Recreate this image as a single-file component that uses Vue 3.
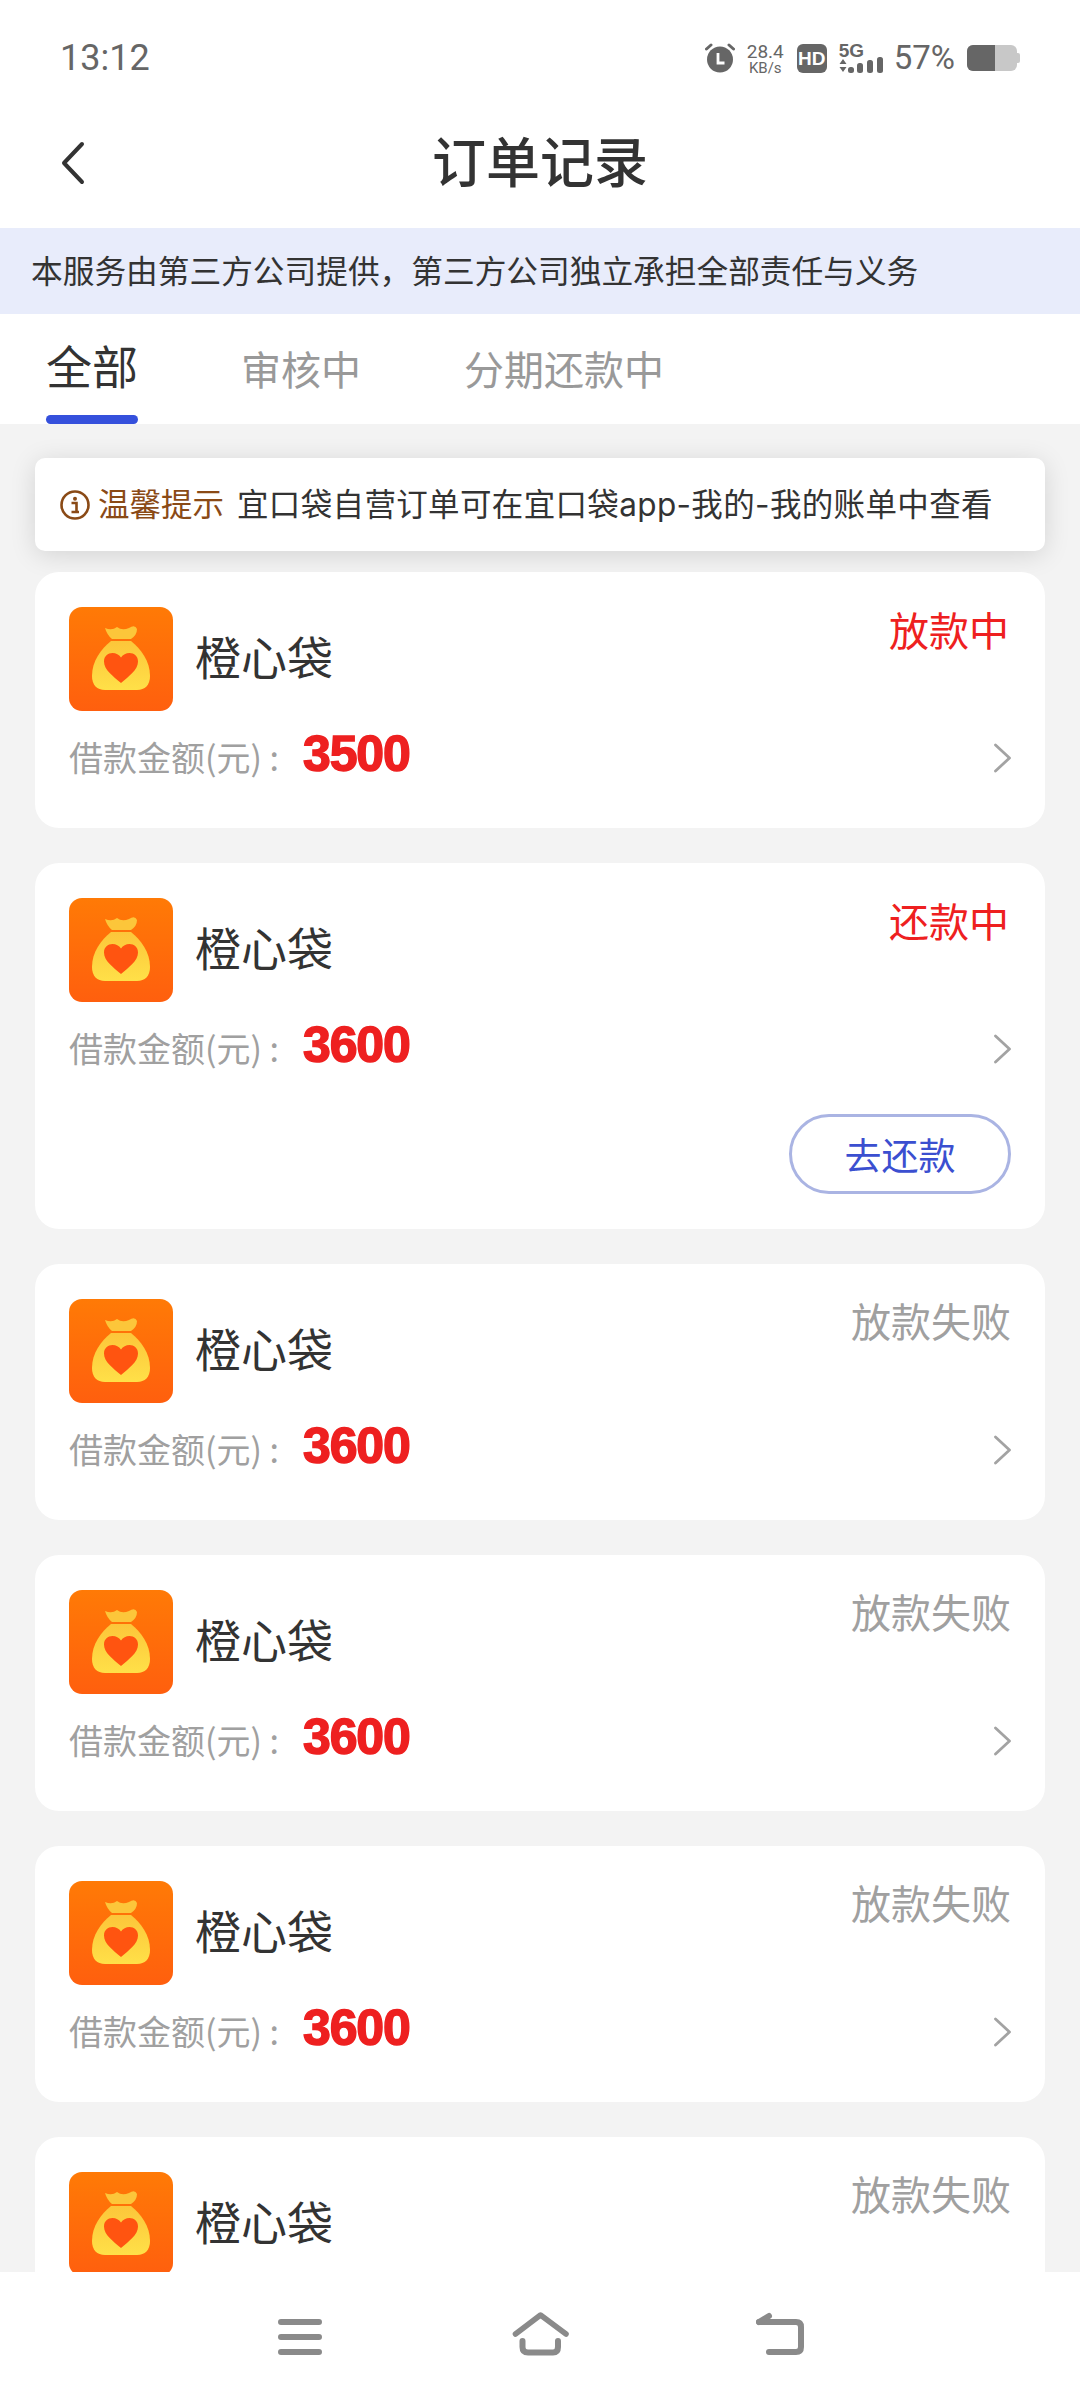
<script setup>
const cards = [
  { amount: '3500', status: '放款中', active: true },
  { amount: '3600', status: '还款中', active: true, action: '去还款' },
  { amount: '3600', status: '放款失败' },
  { amount: '3600', status: '放款失败' },
  { amount: '3600', status: '放款失败' },
  { amount: '3600', status: '放款失败' },
]
</script>

<template>
  <div class="page">
    <div class="status-bar">
      <span class="time">13:12</span>
      <div class="status-right">
        <svg class="alarm" viewBox="0 0 30 30" width="30" height="30">
          <circle cx="15" cy="16.5" r="13" fill="#666" />
          <path d="M1.5 6 L6 2 M28.500 6 L24 2" stroke="#666" stroke-width="3" stroke-linecap="round" />
          <path d="M13 10 V20 H19.500" fill="none" stroke="#fff" stroke-width="2.8" />
        </svg>
        <div class="speed"><span>28.4</span><span class="unit">KB/s</span></div>
        <span class="hd">HD</span>
        <div class="signal">
          <span class="five-g">5G</span>
          <svg viewBox="0 0 44 30" width="44" height="30">
            <path d="M0.5 21 L4 16 L7.500 21 Z M0.5 24 H7.500 L4 29 Z" fill="#666" />
            <rect x="9" y="24" width="6" height="6" rx="2.5" fill="#666" />
            <rect x="18" y="20" width="6" height="10" rx="2.5" fill="#666" />
            <rect x="28" y="17" width="6" height="13" rx="2.5" fill="#666" />
            <rect x="38" y="14" width="6" height="16" rx="2.5" fill="#666" />
          </svg>
        </div>
        <span class="percent">57%</span>
        <div class="battery"><div class="battery-level"></div></div>
      </div>
    </div>

    <header class="title-bar">
      <svg class="back" viewBox="0 0 26 44" width="26" height="44">
        <path d="M22 3 L4 22 L22 41" fill="none" stroke="#333" stroke-width="4" stroke-linecap="round" stroke-linejoin="round" />
      </svg>
      <h1>订单记录</h1>
    </header>

    <div class="banner">本服务由第三方公司提供，第三方公司独立承担全部责任与义务</div>

    <nav class="tabs">
      <span class="tab tab-active">全部</span>
      <span class="tab">审核中</span>
      <span class="tab">分期还款中</span>
    </nav>

    <main class="content">
      <div class="notice">
        <svg viewBox="0 0 30 30" width="30" height="30" class="notice-icon">
          <circle cx="15" cy="15" r="13.500" fill="none" stroke="#8a4a16" stroke-width="2.6" />
          <circle cx="15" cy="8.800" r="2" fill="#8a4a16" />
          <path d="M11.500 13 H16.500 V21 M11.500 22 H19" fill="none" stroke="#8a4a16" stroke-width="2.6" />
        </svg>
        <span class="notice-label">温馨提示</span>
        <span class="notice-text">宜口袋自营订单可在宜口袋app-我的-我的账单中查看</span>
      </div>

      <div class="list">
        <article v-for="(card, i) in cards" :key="i" class="card">
          <div class="card-head">
            <svg class="logo" viewBox="0 0 104 104" width="104" height="104">
              <defs>
                <linearGradient id="logoBg" x1="0" y1="0" x2="0" y2="1">
                  <stop offset="0" stop-color="#ff7a06" />
                  <stop offset="1" stop-color="#ff5f0e" />
                </linearGradient>
                <linearGradient id="bagFill" x1="0" y1="0" x2="0" y2="1">
                  <stop offset="0" stop-color="#fcc63a" />
                  <stop offset="1" stop-color="#ffe048" />
                </linearGradient>
              </defs>
              <rect width="104" height="104" rx="13" fill="url(#logoBg)" />
              <path d="M36 21 Q43 24 48 20 Q53 24 60 21 Q66 17 68 22 Q68 28 62 32 H43 Q38 28 36 21 Z" fill="#fcc63a" />
              <path d="M42 34 H62 C72 42 81 54 81 69 C81 78 76 83 68 83 H36 C28 83 23 78 23 69 C23 54 32 42 42 34 Z" fill="url(#bagFill)" />
              <path d="M52 76 C44 69 35 63 35 54.500 C35 49 39 46 43.500 46 C47 46 50 47.500 52 50.500 C54 47.500 57 46 60.500 46 C65 46 69 49 69 54.500 C69 63 60 69 52 76 Z" fill="#ff5410" />
            </svg>
            <span class="name">橙心袋</span>
            <span class="state" :class="{ 'state-active': card.active }">{{ card.status }}</span>
          </div>
          <div class="amount-row">
            <span class="amount-label">借款金额(元) :</span>
            <span class="amount">{{ card.amount }}</span>
            <svg class="chevron" viewBox="0 0 18 30" width="18" height="30">
              <path d="M2.500 2 L16.500 15 L2.500 28" fill="none" stroke="#a3a3a3" stroke-width="2.8" stroke-linecap="round" stroke-linejoin="round" />
            </svg>
          </div>
          <div v-if="card.action" class="actions">
            <button class="action-btn" type="button">{{ card.action }}</button>
          </div>
        </article>
      </div>
    </main>

    <footer class="nav-bar">
      <svg class="nav-menu" viewBox="0 0 44 36" width="44" height="36">
        <path d="M3 3 H41 M3 18 H41 M3 33 H41" stroke="#8a8a8a" stroke-width="6" stroke-linecap="round" />
      </svg>
      <svg class="nav-home" viewBox="0 0 58 44" width="58" height="44">
        <path d="M3.500 22 L28.500 3 L54 22" fill="none" stroke="#8a8a8a" stroke-width="5.600" stroke-linecap="round" stroke-linejoin="round" />
        <path d="M10.500 29 V35 Q10.500 40.500 16 40.500 H41 Q46 40.500 46 35 V29" fill="none" stroke="#8a8a8a" stroke-width="6" stroke-linecap="round" />
      </svg>
      <svg class="nav-back" viewBox="0 0 50 44" width="50" height="44">
        <path d="M3 10 H40 Q45 10 45 15 V35 Q45 40 40 40 H13" fill="none" stroke="#8a8a8a" stroke-width="6" stroke-linecap="round" />
        <path d="M3 10 L13 4" fill="none" stroke="#8a8a8a" stroke-width="6" stroke-linecap="round" />
      </svg>
    </footer>
  </div>
</template>

<style>
html, body { margin: 0; padding: 0; background: #fff; }
</style>

<style scoped>
.page {
  width: 1080px;
  height: 2400px;
  display: flex;
  flex-direction: column;
  overflow: hidden;
  background: #fff;
  font-family: "Noto Sans CJK SC", "Liberation Sans", sans-serif;
  color: #333;
}
.status-bar {
  height: 116px;
  flex: none;
  box-sizing: border-box;
  padding: 0 60px;
  display: flex;
  justify-content: space-between;
  align-items: flex-start;
  color: #666;
  font-family: Roboto, "Liberation Sans", sans-serif;
}
.time { font-size: 36px; line-height: 42px; margin-top: 37px; }
.status-right { display: flex; align-items: center; margin-top: 43px; height: 30px; }
.alarm { margin-right: 12px; }
.speed { display: flex; flex-direction: column; align-items: center; font-size: 19px; line-height: 19px; width: 37px; }
.speed .unit { font-size: 15px; line-height: 14px; }
.hd {
  width: 30px; height: 29px; margin-left: 13px; border-radius: 6px;
  background: #666; color: #fff; font: 700 19px/29px "Liberation Sans", sans-serif; text-align: center;
}
.signal { width: 44px; height: 30px; margin-left: 12px; position: relative; }
.signal svg { display: block; }
.five-g { position: absolute; left: 0; top: 0; font: 700 19px/15px "Liberation Sans", sans-serif; }
.percent { font-size: 33px; line-height: 36px; margin-left: 11px; }
.battery {
  width: 50px; height: 26px; margin-left: 12px; margin-right: 3px; border-radius: 6px; background: #c8c8c8; position: relative;
}
.battery::after {
  content: ""; position: absolute; left: 50px; top: 8px; width: 3px; height: 10px; border-radius: 0 2px 2px 0; background: #c8c8c8;
}
.battery-level { width: 28px; height: 100%; background: #666; border-radius: 6px 0 0 6px; }

.title-bar { height: 112px; flex: none; display: flex; align-items: center; justify-content: center; position: relative; }
.back { position: absolute; left: 60px; top: 25px; }
.title-bar h1 { margin: 0 0 24px; font-size: 54px; font-weight: 500; line-height: 70px; color: #333; }

.banner {
  height: 86px; flex: none; box-sizing: border-box; padding-left: 31px;
  background: #e8ecfb; font-size: 31.7px; line-height: 82px; color: #333; white-space: nowrap;
}

.tabs { height: 110px; flex: none; display: flex; align-items: flex-start; padding-left: 46px; box-sizing: border-box; }
.tab { font-size: 40px; line-height: 56px; margin-top: 26px; color: #999; margin-right: 103px; position: relative; }
.tab-active { font-size: 46px; color: #333; margin-top: 22px; }
.tab-active::after {
  content: ""; position: absolute; left: 0; right: 0; top: 79px; height: 9px;
  border-radius: 5px; background: #3550dc;
}

.content { flex: 1; min-height: 0; overflow: hidden; background: #f3f3f3; padding: 34px 35px 0; }
.notice {
  height: 93px; box-sizing: border-box; padding: 0 0 5px 25px; display: flex; align-items: center;
  background: #fff; border-radius: 10px; box-shadow: 0 4px 26px rgba(0, 0, 0, 0.13);
  font-size: 31.5px; white-space: nowrap;
}
.notice-icon { flex: none; margin-top: 5px; }
.notice-label { color: #8a4a16; margin-left: 8px; }
.notice-text { margin-left: 13px; color: #333; font-family: Inter, "Noto Sans CJK SC", sans-serif; letter-spacing: 0.35px; }

.list { display: flex; flex-direction: column; gap: 35px; margin-top: 21px; }
.card { flex: none; background: #fff; border-radius: 24px; padding: 35px 34px 42px; }
.card-head { display: flex; align-items: center; }
.logo { flex: none; }
.name { font-size: 46px; line-height: 60px; margin: 0 0 8px 22px; color: #333; }
.state { margin-left: auto; margin-top: -2px; align-self: flex-start; font-size: 40px; line-height: 46px; color: #a0a0a0; }
.state-active { color: #ee2020; margin-top: -1px; margin-right: 2px; }
.amount-row { display: flex; align-items: center; height: 56px; margin-top: 19px; }
.amount-label { font-size: 34px; color: #a0a0a0; line-height: 56px; margin-top: -3px; }
.amount {
  margin: -9px 0 0 24px; font: 700 50px/56px "Liberation Sans", sans-serif; color: #ee2020;
  letter-spacing: -1.2px; -webkit-text-stroke: 1.5px #ee2020;
}
.chevron { margin-left: auto; }
.actions { display: flex; justify-content: flex-end; margin: 37px 0 -7px; }
.action-btn {
  width: 222px; height: 80px; box-sizing: border-box; padding: 0;
  background: #fff; border: 3px solid #aab4e3; border-radius: 40px;
  color: #3b4fd0; font-family: inherit; font-size: 37px; line-height: 1;
}
.nav-bar {
  height: 128px; flex: none; box-sizing: border-box; background: #fff;
  display: flex; align-items: flex-start; padding: 40px 0 0 278px;
}
.nav-menu { margin: 7px 0 0 0; }
.nav-home { margin-left: 190px; }
.nav-back { margin-left: 186px; }
</style>
